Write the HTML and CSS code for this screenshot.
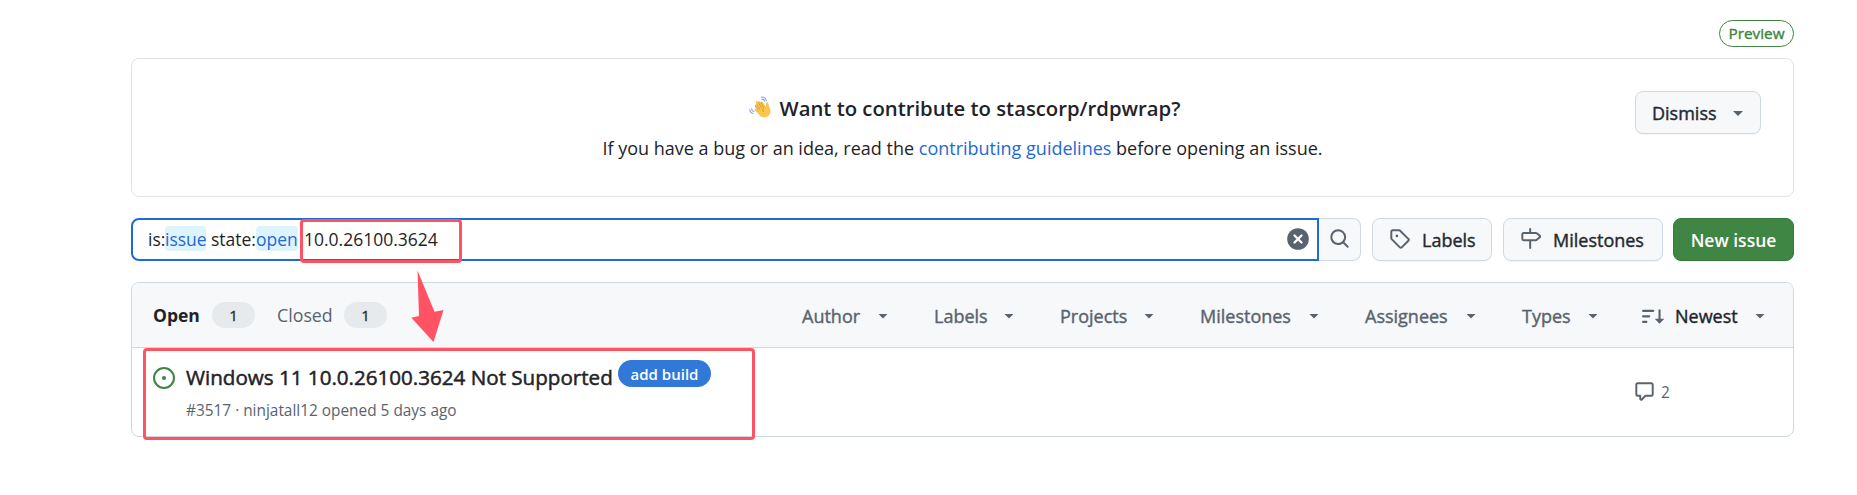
FILE: index.html
```html
<!DOCTYPE html>
<html lang="en">
<head>
<meta charset="utf-8">
<title>Issues · stascorp/rdpwrap</title>
<link rel="stylesheet" href="styles.css">
</head>
<body>
<main class="page">
  <div class="preview-row"><span class="preview">Preview</span></div>

  <section class="banner">
    <div class="banner-text">
      <h1 class="banner-title">
        <svg class="wave" viewBox="0 0 22 22" width="22" height="22">
          <g fill="none" stroke="#7ea6f5" stroke-width="1.1" stroke-linecap="round">
            <path d="M12.2 1.2c2.400-.8 4.600.7 5.200 3.600M12.800 3.200c1.500-.3 2.500.5 2.900 2M.8 13.500c0 2 1.200 3.600 3.200 4M2.600 12.800c.2 1.400.9 2.300 2.200 2.700"/>
          </g>
          <path fill="#fbc64f" d="M6.300 10.200c-.9-1.500.8-2.600 1.700-1.300L6.900 6.800c-.7-1.500 1-2.400 1.900-1.100l.5.8c-.4-1.400 1.200-2.100 2-.8l.6.9c0-1.200 1.400-1.500 2-.4l2.700 4.400c.4-1 .1-2.300.5-3.400.5-1.400 2.200-1.200 2.300.2.200 2 1.200 3.600 1.800 5.800.9 3.400-.5 6.200-3 7.500-2.800 1.500-5.600.8-7.700-1.400l-4.700-5c-1-1.200.3-2.400 1.400-1.500l1.500 1.200-2.600-3.200c-.7-1.100.6-2.300 1.700-1.200z"/>
          <path fill="none" stroke="#c98a2b" stroke-width=".7" stroke-linecap="round" d="M7.900 8.900l3 3.900M9.300 6.500l3.300 5.200M11.900 6.600l3 5c-1.200 1.200-1.200 2.800-.6 4M6.300 10.200l3.100 3.900"/>
        </svg>
        <span class="t-title">Want to contribute to stascorp/rdpwrap?</span>
      </h1>
      <p class="banner-copy">If you have a bug or an idea, read the <a class="link">contributing guidelines</a> before opening an issue.</p>
    </div>
    <button class="btn dismiss"><span class="t-dismiss">Dismiss</span><i class="caret"></i></button>
  </section>

  <div class="toolbar">
    <div class="search">
      <div class="field">
        <span class="query"><span class="q-is">is:</span><span class="token q-issue">issue</span><span class="q-state">state:</span><span class="token q-open">open</span><span class="q-num">10.0.26100.3624</span></span>
        <svg class="clear" viewBox="0 0 22 22" width="22" height="22"><circle cx="11" cy="11" r="10.800" fill="#59636e"/><path d="M7.500 7.500l7 7M14.500 7.500l-7 7" stroke="#fff" stroke-width="2.300" stroke-linecap="round"/></svg>
      </div>
      <div class="search-btn">
        <svg viewBox="0 0 16 16" width="21" height="21" fill="#59636e"><path d="M10.680 11.740a6 6 0 0 1-7.922-8.982 6 6 0 0 1 8.982 7.922l3.040 3.040a.749.749 0 0 1-.326 1.275.749.749 0 0 1-.734-.215ZM11.500 7a4.499 4.499 0 1 0-8.997 0A4.499 4.499 0 0 0 11.500 7Z"/></svg>
      </div>
    </div>
    <a class="btn labels">
      <svg viewBox="0 0 16 16" width="21" height="21" fill="#59636e"><path d="M1 7.775V2.750C1 1.784 1.784 1 2.750 1h5.025c.464 0 .91.184 1.238.513l6.250 6.250a1.750 1.750 0 0 1 0 2.474l-5.026 5.026a1.750 1.750 0 0 1-2.474 0l-6.250-6.250A1.752 1.752 0 0 1 1 7.775Zm1.500 0c0 .066.026.13.073.177l6.250 6.250a.25.25 0 0 0 .354 0l5.025-5.025a.25.25 0 0 0 0-.354l-6.250-6.250a.25.25 0 0 0-.177-.073H2.750a.25.25 0 0 0-.25.25ZM6 5a1 1 0 1 1 0 2 1 1 0 0 1 0-2Z"/></svg>
      <span class="t-labels">Labels</span>
    </a>
    <a class="btn milestones">
      <svg viewBox="0 0 16 16" width="21" height="21" fill="#59636e"><path d="M7.750 0a.75.75 0 0 1 .75.75V3h3.634c.414 0 .814.147 1.130.414l2.070 1.750a1.750 1.750 0 0 1 0 2.672l-2.070 1.750a1.750 1.750 0 0 1-1.130.414H8.500v5.250a.75.75 0 0 1-1.500 0V10H2.750A1.750 1.750 0 0 1 1 8.250v-3.500C1 3.784 1.784 3 2.750 3H7V.75A.75.75 0 0 1 7.750 0Zm4.384 8.500a.25.25 0 0 0 .161-.06l2.070-1.750a.248.248 0 0 0 0-.38l-2.070-1.750a.25.25 0 0 0-.161-.06H2.750a.25.25 0 0 0-.25.25v3.500c0 .138.112.25.25.25h9.384Z"/></svg>
      <span class="t-milestones">Milestones</span>
    </a>
    <a class="btn new-issue"><span class="t-new">New issue</span></a>
  </div>

  <section class="list">
    <header class="list-head">
      <div class="states">
        <b class="t-open">Open</b><span class="count">1</span>
        <span class="t-closed">Closed</span><span class="count">1</span>
      </div>
      <nav class="filters">
        <span class="filter"><span class="f-author">Author</span><i class="caret"></i></span>
        <span class="filter"><span class="f-labels">Labels</span><i class="caret"></i></span>
        <span class="filter"><span class="f-projects">Projects</span><i class="caret"></i></span>
        <span class="filter"><span class="f-milestones">Milestones</span><i class="caret"></i></span>
        <span class="filter"><span class="f-assignees">Assignees</span><i class="caret"></i></span>
        <span class="filter"><span class="f-types">Types</span><i class="caret"></i></span>
        <span class="filter sort">
          <svg viewBox="0 0 16 16" width="22" height="22" fill="#59636e"><path d="M0 4.250a.75.75 0 0 1 .75-.75h7.500a.75.75 0 0 1 0 1.500H.75A.75.75 0 0 1 0 4.250Zm0 4a.75.75 0 0 1 .75-.75h4.500a.75.75 0 0 1 0 1.500H.75A.75.75 0 0 1 0 8.250Zm0 4a.75.75 0 0 1 .75-.75h2.500a.75.75 0 0 1 0 1.500H.75a.75.75 0 0 1-.75-.75ZM13.500 10h2.250a.25.25 0 0 1 .177.427l-3 3a.25.25 0 0 1-.354 0l-3-3A.25.25 0 0 1 9.750 10H12V3.750a.75.75 0 0 1 1.500 0V10Z"/></svg>
          <span class="f-newest">Newest</span><i class="caret"></i>
        </span>
      </nav>
    </header>
    <article class="issue">
      <svg class="issue-icon" viewBox="0 0 16 16" width="22" height="22" fill="#3f8544"><path d="M8 9.500a1.500 1.500 0 1 0 0-3 1.500 1.500 0 0 0 0 3Z"/><path d="M8 0a8 8 0 1 1 0 16A8 8 0 0 1 8 0ZM1.500 8a6.500 6.500 0 1 0 13 0 6.500 6.500 0 0 0-13 0Z"/></svg>
      <div class="issue-main">
        <div class="issue-line"><span class="issue-title">Windows 11 10.0.26100.3624 Not Supported</span><span class="tag"><span class="t-tag">add build</span></span></div>
        <div class="meta"><span class="t-meta">#3517 · ninjatall12 opened 5 days ago</span></div>
      </div>
      <div class="comments">
        <svg viewBox="0 0 16 16" width="21" height="21" fill="#59636e"><path d="M1 2.750C1 1.784 1.784 1 2.750 1h10.500c.966 0 1.750.784 1.750 1.750v7.500A1.750 1.750 0 0 1 13.250 12H9.060l-2.573 2.573A1.458 1.458 0 0 1 4 13.543V12H2.750A1.750 1.750 0 0 1 1 10.250Zm1.750-.25a.25.25 0 0 0-.25.25v7.500c0 .138.112.25.25.25h2a.75.75 0 0 1 .75.75v2.190l2.720-2.720a.749.749 0 0 1 .53-.22h4.500a.25.25 0 0 0 .25-.25v-7.500a.25.25 0 0 0-.25-.25Z"/></svg>
        <span>2</span>
      </div>
    </article>
  </section>
</main>

<div class="mark mark-query"></div>
<div class="mark mark-issue"></div>
<svg class="arrow" viewBox="0 0 34 74" width="34" height="74"><path fill="#ff5364" d="M7.500.5 24.500 41.800 33.500 40 23.500 72 1.300 47.800 9 46z"/></svg>
</body>
</html>
```

FILE: styles.css
```css
* { box-sizing: border-box; }

body {
  margin: 0;
  width: 1857px;
  height: 495px;
  overflow: hidden;
  position: relative;
  background: #fff;
  color: #1f2328;
  font: 17.5px/24px "Open Sans", "Noto Sans", sans-serif;
}

svg { display: block; flex: none; }
span, b { white-space: nowrap; }

.page { width: 1663px; margin-left: 131px; padding-top: 20px; }

.preview-row { display: flex; justify-content: flex-end; height: 38px; }
.preview {
  width: 75px; height: 27px; border: 1px solid #3f8544; border-radius: 14px;
  color: #3f8544; font-size: 15.3px; -webkit-text-stroke: .4px; line-height: 25px; text-align: center;
}

.banner {
  display: grid; grid-template-columns: 32px 1fr 126px; column-gap: 0;
  height: 139px; padding: 32px 32px 0 0; border: 1px solid #dfe3e7; border-radius: 8px;
}
.banner-text { grid-column: 1 / 4; grid-row: 1; text-align: center; padding-left: 32px; }
.banner-title {
  display: flex; justify-content: center; gap: 9px; margin: 4px 0 0; padding-left: 4px; height: 26px;
  font-size: 20.3px; font-weight: 600; line-height: 27px;
}
.wave { margin-top: 1px; }
.banner-copy { margin: 15px 0 0; font-size: 18px; line-height: 25px; white-space: nowrap; }
.link { color: #2469d6; }

.btn {
  display: flex; align-items: center; height: 43px; border: 1px solid #d1d9e0; border-radius: 8px;
  background: #f6f8fa; font: 18px/24px "Open Sans", sans-serif; color: #25292e;
  -webkit-text-stroke: .4px;
  box-shadow: 0 1px 0 rgba(31, 35, 40, .04);
}
.dismiss { grid-column: 3; grid-row: 1; width: 126px; padding: 0 17px 0 16px; justify-content: space-between; }
.dismiss .caret { margin-top: 2px; }

.caret { width: 10px; height: 5px; flex: none; background: #59636e; clip-path: polygon(0 0, 100% 0, 50% 100%); }

.toolbar { display: flex; margin-top: 21px; height: 43px; }
.search { display: flex; width: 1230px; margin-right: 11px; }
.field {
  display: flex; justify-content: space-between; align-items: center; width: 1188px; padding: 0 8px 0 15px;
  border: 2px solid #1f6bd3; border-radius: 8px 0 0 8px;
}
.clear { margin-top: -2px; }
.query { display: flex; height: 25px; line-height: 26px; margin-top: -2px; }
.token { background: #ddf4ff; color: #2469d6; border-radius: 4px; }
.q-is { width: 17px; }
.q-issue { width: 41px; margin-right: 5px; }
.q-state { width: 45px; }
.q-open { width: 42px; margin-right: 6px; }
.search-btn {
  display: grid; place-items: center; width: 42px; padding-bottom: 2px; background: #f6f8fa;
  border: 1px solid #d1d9e0; border-left: 0; border-radius: 0 8px 8px 0;
}
.labels { width: 120px; margin-right: 11px; padding: 0 16px; gap: 12px; }
.labels svg, .milestones svg { margin-bottom: 3px; }
.milestones { width: 160px; margin-right: 10px; padding: 0 16px; gap: 12px; }
.new-issue {
  width: 121px; justify-content: center; background: #3f8544; border-color: #37773c; color: #fff;
  font-size: 17.5px; font-weight: 600; -webkit-text-stroke: 0;
}

.list { height: 155px; margin-top: 21px; border: 1px solid #d1d9e0; border-radius: 8px; overflow: hidden; }
.list-head {
  display: flex; justify-content: space-between; align-items: center; height: 65px; padding: 0 28px 0 21px;
  border-bottom: 1px solid #d1d9e0; background: #f6f8fa; color: #59636e;
}
.states { display: flex; align-items: center; }
.t-open { width: 59px; color: #1f2328; font-weight: 700; }
.t-closed { width: 67px; margin-left: 22px; font-size: 17.8px; }
.count {
  width: 43px; height: 26px; border-radius: 13px; background: #e6eaed; color: #25292e;
  font-size: 15px; -webkit-text-stroke: .3px; line-height: 26px; text-align: center;
}
.filters { display: flex; gap: 46px; padding-top: 2px; font-size: 18px; -webkit-text-stroke: .4px; }
.filter { display: flex; align-items: center; }
.filter .caret { margin-left: 17px; }
.f-author { width: 59px; }
.f-labels { width: 53px; }
.f-projects { width: 67px; }
.f-milestones { width: 92px; }
.f-assignees { width: 84px; }
.f-types { width: 49px; }
.f-newest { width: 63px; margin-left: 11px; color: #1f2328; }
.sort { margin-left: -2px; }

.issue { display: flex; height: 88px; padding-left: 21px; }
.issue-icon { margin-top: 19px; }
.issue-main { width: 1459px; padding: 12px 0 0 11px; }
.issue-line { display: flex; height: 30px; }
.issue-title { width: 432px; font-size: 20.6px; -webkit-text-stroke: .5px; line-height: 34px; }
.tag {
  width: 93px; height: 27px; border-radius: 14px; background: #3079d8; color: #fff;
  font-size: 15px; font-weight: 600; line-height: 28px; text-align: center;
}
.meta { margin-top: 9px; color: #59636e; font-size: 15.4px; line-height: 24px; }
.comments { display: flex; gap: 6px; margin-top: 33px; color: #59636e; font-size: 15.4px; line-height: 23px; }

.mark { position: absolute; border: 3px solid #ff5364; border-radius: 4px; }
.mark-query { left: 300px; top: 219px; width: 162px; height: 44px; }
.mark-issue { left: 143px; top: 348px; width: 612px; height: 92px; }
.arrow { position: absolute; left: 410px; top: 270px; }
```
